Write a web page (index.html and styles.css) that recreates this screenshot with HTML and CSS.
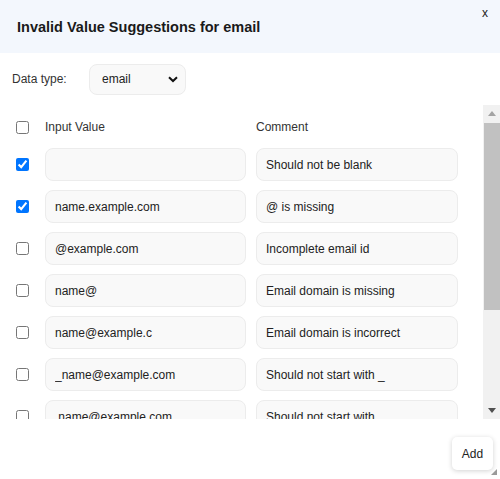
FILE: index.html
```html
<!DOCTYPE html>
<html lang="en">
<head>
    <meta charset="UTF-8">
    <meta name="viewport" content="width=device-width, initial-scale=1.0">
    <title>Invalid Value Suggestions</title>
    <link rel="stylesheet" href="styles.css">
</head>
<body>
    <div class="dialog">
        <div class="dialog-header">
            <h2>Invalid Value Suggestions for email</h2>
            <button class="close-btn" type="button">x</button>
        </div>

        <div class="type-row">
            <label>Data type:</label>
            <div class="select-box">
                <span>email</span>
                <svg width="10" height="7" viewBox="0 0 10 7"><path d="M1 1.2 L5 5 L9 1.2" fill="none" stroke="#111" stroke-width="2"/></svg>
            </div>
        </div>

        <div class="table-wrap">
            <div class="table-area">
                <div class="grid">
                    <div class="cell-check"><input type="checkbox"></div>
                    <div class="col-title">Input Value</div>
                    <div class="col-title">Comment</div>

                    <div class="cell-check"><input type="checkbox" checked></div>
                    <input class="field" type="text" value="">
                    <input class="field" type="text" value="Should not be blank">

                    <div class="cell-check"><input type="checkbox" checked></div>
                    <input class="field" type="text" value="name.example.com">
                    <input class="field" type="text" value="@ is missing">

                    <div class="cell-check"><input type="checkbox"></div>
                    <input class="field" type="text" value="@example.com">
                    <input class="field" type="text" value="Incomplete email id">

                    <div class="cell-check"><input type="checkbox"></div>
                    <input class="field" type="text" value="name@">
                    <input class="field" type="text" value="Email domain is missing">

                    <div class="cell-check"><input type="checkbox"></div>
                    <input class="field" type="text" value="name@example.c">
                    <input class="field" type="text" value="Email domain is incorrect">

                    <div class="cell-check"><input type="checkbox"></div>
                    <input class="field" type="text" value="_name@example.com">
                    <input class="field" type="text" value="Should not start with _">

                    <div class="cell-check"><input type="checkbox"></div>
                    <input class="field" type="text" value=".name@example.com">
                    <input class="field" type="text" value="Should not start with .">
                </div>
            </div>
            <div class="scrollbar">
                <div class="sb-arrow"><svg width="8" height="5" viewBox="0 0 8 5"><path d="M0 5 L4 0 L8 5 Z" fill="#a3a3a3"/></svg></div>
                <div class="sb-thumb"></div>
                <div class="sb-track"></div>
                <div class="sb-arrow"><svg width="8" height="5" viewBox="0 0 8 5"><path d="M0 0 L4 5 L8 0 Z" fill="#505050"/></svg></div>
            </div>
        </div>

        <div class="dialog-footer">
            <button class="add-btn" type="button">Add</button>
        </div>
        <svg class="resize-handle" width="6" height="6" viewBox="0 0 6 6"><path d="M6 0 L6 6 L0 6 Z" fill="#9a9a9a"/></svg>
    </div>
</body>
</html>
```

FILE: styles.css
```css
* {
    margin: 0;
    padding: 0;
    box-sizing: border-box;
    font-family: "Liberation Sans", Arial, sans-serif;
}

body {
    background: #fff;
    color: #222;
    font-size: 12px;
}

.dialog {
    position: relative;
    width: 500px;
    height: 479px;
    display: flex;
    flex-direction: column;
    background: #fff;
}

.dialog-header {
    position: relative;
    height: 53px;
    background: #f3f7fd;
    display: flex;
    align-items: center;
    padding-left: 17px;
}

.dialog-header h2 {
    font-size: 14.5px;
    font-weight: bold;
    color: #1a1a1a;
}

.close-btn {
    position: absolute;
    top: 6px;
    right: 12px;
    background: none;
    border: none;
    font-size: 12px;
    color: #222;
    cursor: pointer;
}

.type-row {
    height: 52px;
    display: flex;
    align-items: center;
    padding-left: 12px;
}

.type-row label {
    width: 77px;
    color: #333;
}

.select-box {
    width: 97px;
    height: 31px;
    display: flex;
    align-items: center;
    justify-content: space-between;
    padding: 0 7px 0 12px;
    border: 1px solid #ececec;
    border-radius: 8px;
    background: #f9f9f9;
    color: #222;
}

.table-wrap {
    height: 314px;
    display: flex;
}

.table-area {
    flex: 1;
    overflow: hidden;
}

.grid {
    display: grid;
    grid-template-columns: 35px 201px 202px;
    grid-template-rows: 24px;
    grid-auto-rows: 33px;
    column-gap: 10px;
    row-gap: 9px;
    padding-top: 10px;
}

.cell-check {
    display: flex;
    align-items: center;
    padding-left: 16px;
}

.cell-check input {
    margin: 0;
    width: 13px;
    height: 13px;
}

.col-title {
    display: flex;
    align-items: center;
    color: #333;
}

.field {
    height: 33px;
    width: 100%;
    padding: 0 9px;
    border: 1px solid #ececec;
    border-radius: 8px;
    background: #f9f9f9;
    font-size: 12px;
    color: #222;
    outline: none;
}

.scrollbar {
    width: 17px;
    display: flex;
    flex-direction: column;
    background: #f1f1f1;
}

.sb-arrow {
    height: 17px;
    display: flex;
    align-items: center;
    justify-content: center;
}

.sb-thumb {
    height: 187px;
    margin: 1px 0 0 1px;
    background: #c1c1c1;
}

.sb-track {
    flex: 1;
}

.dialog-footer {
    flex: 1;
    display: flex;
    justify-content: flex-end;
    align-items: flex-start;
    padding: 18px 7px 0 0;
}

.add-btn {
    width: 41px;
    height: 33px;
    background: #fff;
    border: none;
    border-radius: 5px;
    box-shadow: 0 1px 5px rgba(0, 0, 0, 0.18);
    font-size: 12px;
    color: #222;
    cursor: pointer;
}

.resize-handle {
    position: absolute;
    right: 3px;
    bottom: 4px;
}
```
